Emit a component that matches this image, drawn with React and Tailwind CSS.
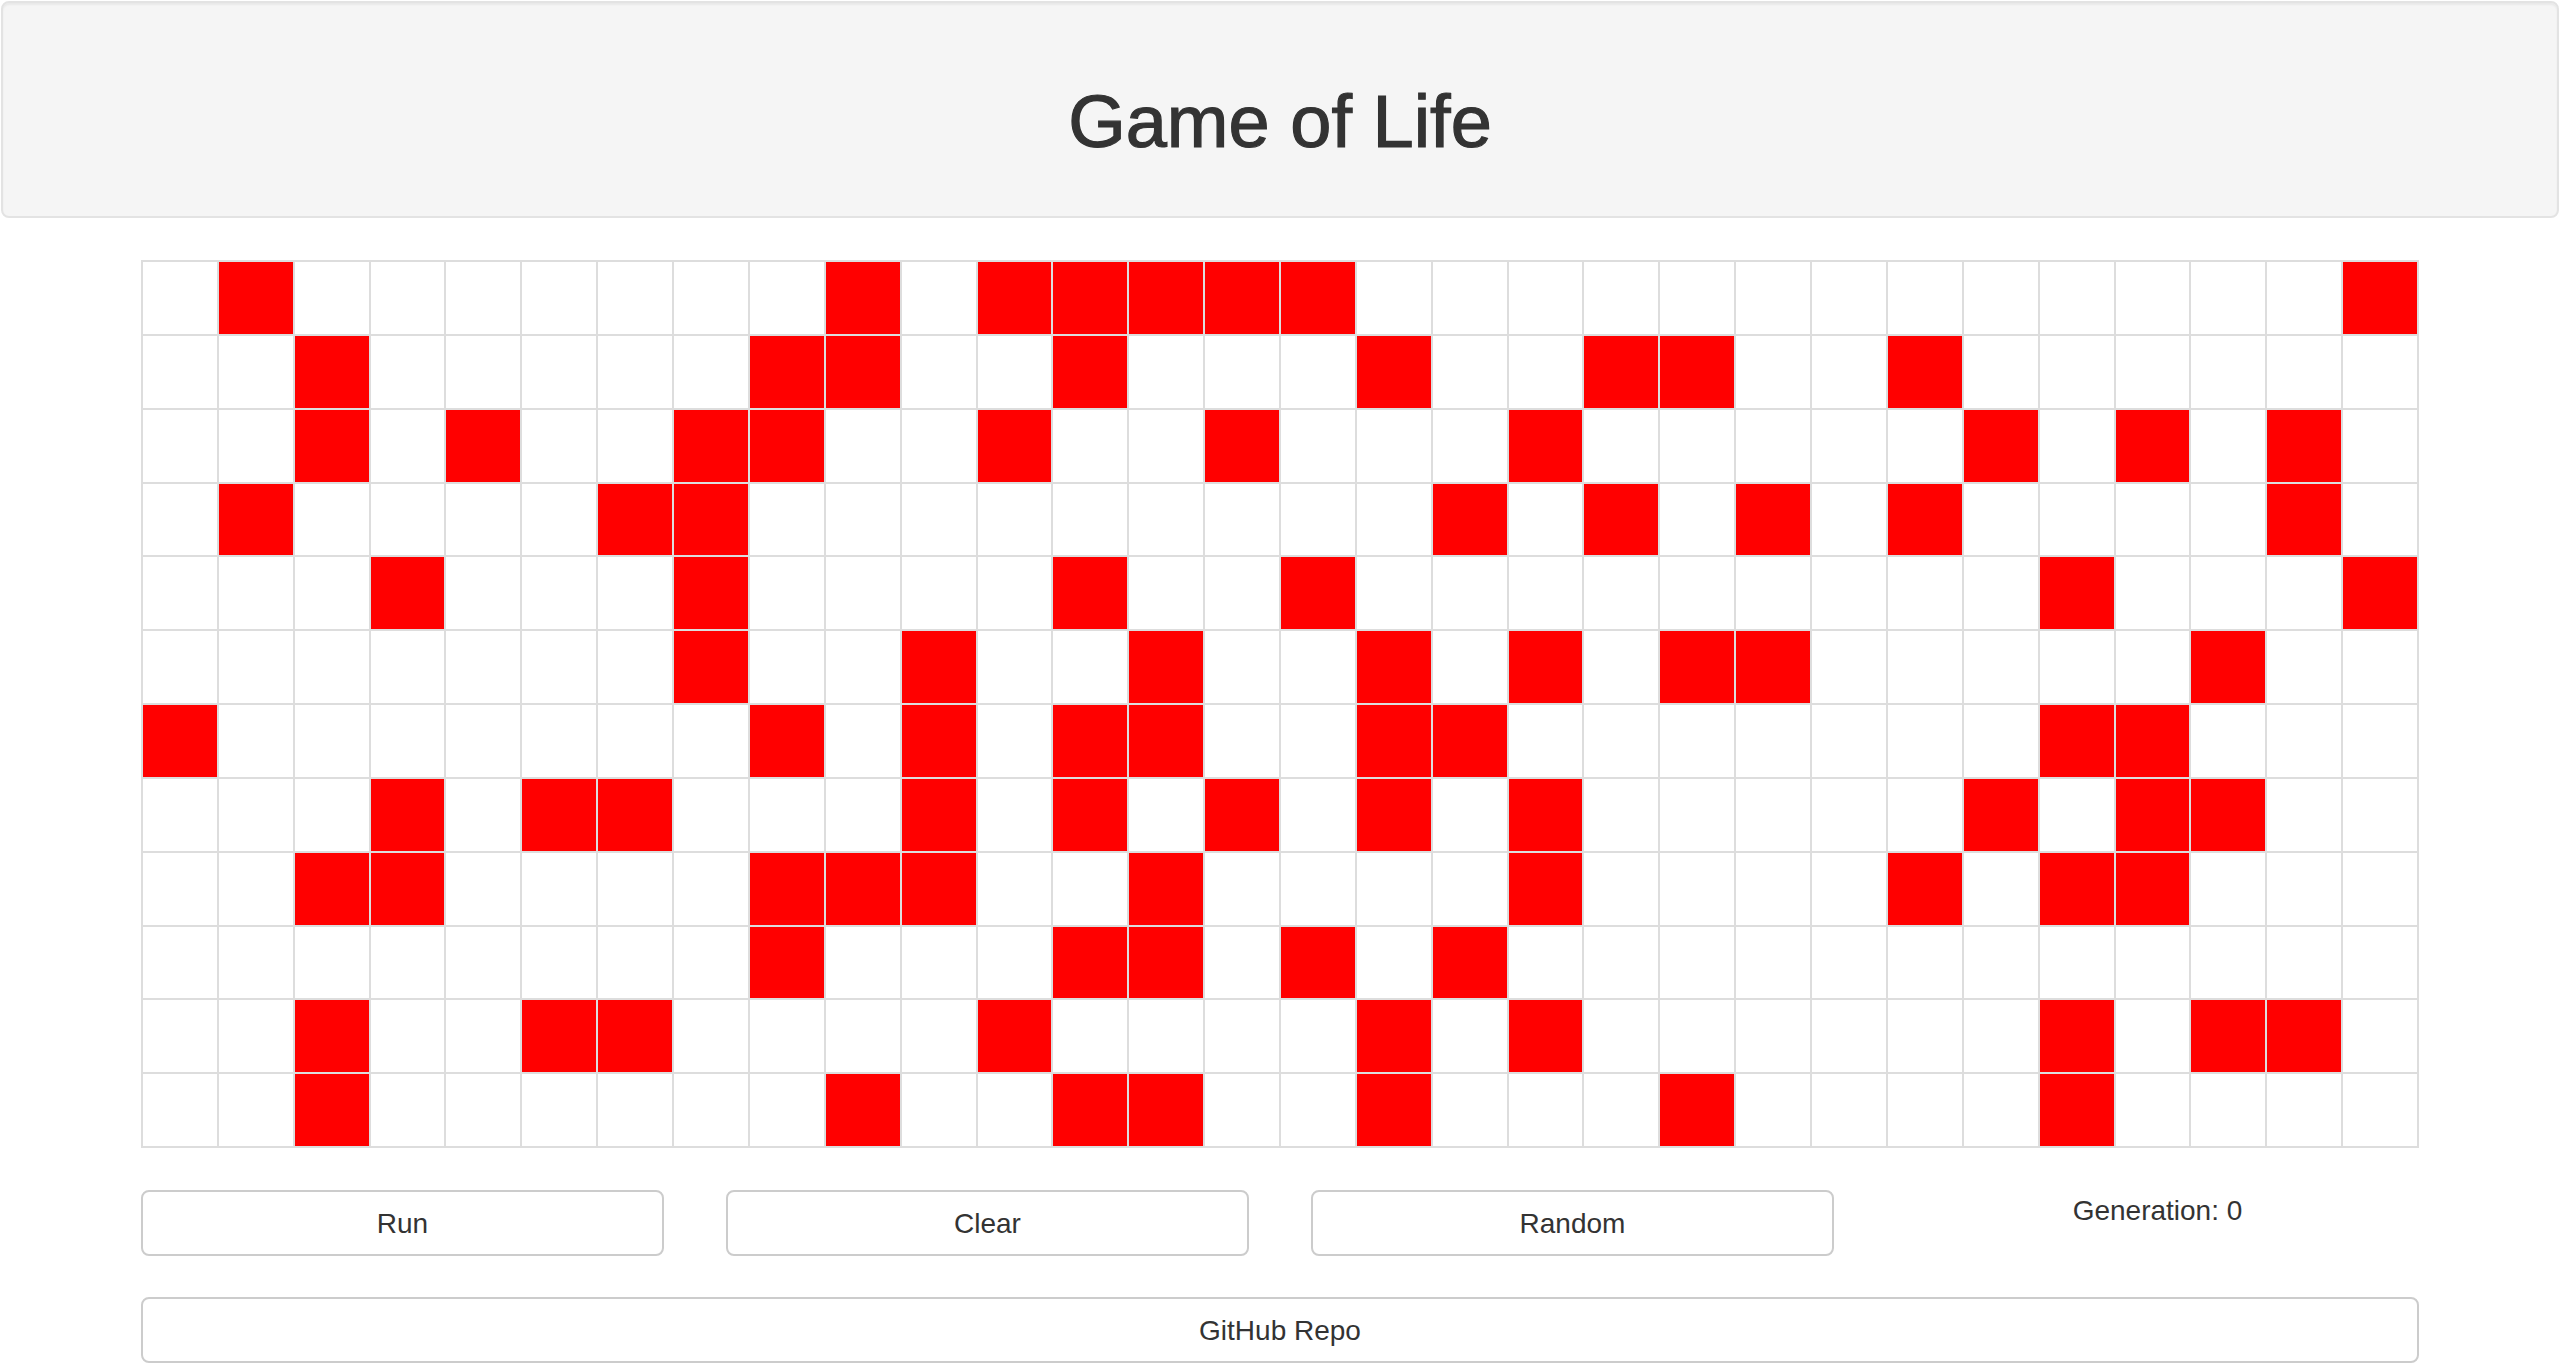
import React, { useState } from "react";

const ROWS = 12;
const COLS = 30;

// live cells, row by row
const SEED = [
  [1, 9, 11, 12, 13, 14, 15, 29],
  [2, 8, 9, 12, 16, 19, 20, 23],
  [2, 4, 7, 8, 11, 14, 18, 24, 26, 28],
  [1, 6, 7, 17, 19, 21, 23, 28],
  [3, 7, 12, 15, 25, 29],
  [7, 10, 13, 16, 18, 20, 21, 27],
  [0, 8, 10, 12, 13, 16, 17, 25, 26],
  [3, 5, 6, 10, 12, 14, 16, 18, 24, 26, 27],
  [2, 3, 8, 9, 10, 13, 18, 23, 25, 26],
  [8, 12, 13, 15, 17],
  [2, 5, 6, 11, 16, 18, 25, 27, 28],
  [2, 9, 12, 13, 16, 20, 25],
];

const makeBoard = () =>
  SEED.map((row) => {
    const cells = Array(COLS).fill(false);
    row.forEach((c) => (cells[c] = true));
    return cells;
  });

const Button = ({ children, onClick }) => (
  <button
    onClick={onClick}
    className="h-[66px] w-full bg-white border-2 border-[#ccc] rounded-[8px] text-[28px] text-[#333] leading-[40px] pt-[2px]"
  >
    {children}
  </button>
);

const App = () => {
  const [board, setBoard] = useState(makeBoard);
  const [generation] = useState(0);

  const toggle = (r, c) => {
    setBoard((prev) =>
      prev.map((row, ri) =>
        ri === r ? row.map((v, ci) => (ci === c ? !v : v)) : row
      )
    );
  };

  const clear = () =>
    setBoard(Array.from({ length: ROWS }, () => Array(COLS).fill(false)));

  const randomize = () =>
    setBoard(
      Array.from({ length: ROWS }, () =>
        Array.from({ length: COLS }, () => Math.random() < 0.25)
      )
    );

  return (
    <div className="min-h-screen bg-white font-['Liberation_Sans',Arial,sans-serif] text-[#333]">
      <div className="mx-[1px] mt-[1px] h-[217px] border-2 border-[#e3e3e3] rounded-[8px] bg-[#f5f5f5] shadow-[inset_0_2px_2px_rgba(0,0,0,0.05)] pt-[79px]">
        <h1 className="text-center text-[74px] leading-[80px] font-normal text-[#333] [-webkit-text-stroke:1.2px_#333]">
          Game of Life
        </h1>
      </div>

      <div className="w-[2278px] mx-auto mt-[42px]">
        <div className="grid grid-cols-[repeat(30,1fr)] grid-rows-[repeat(12,1fr)] gap-[2px] p-[2px] h-[888px] bg-[#ddd]">
          {board.map((row, r) =>
            row.map((alive, c) => (
              <div
                key={`${r}-${c}`}
                onClick={() => toggle(r, c)}
                className={alive ? "bg-[#ff0000]" : "bg-white"}
              />
            ))
          )}
        </div>

        <div className="grid grid-cols-4 gap-[62px] mt-[42px]">
          <Button>Run</Button>
          <Button onClick={clear}>Clear</Button>
          <Button onClick={randomize}>Random</Button>
          <div className="text-center text-[28px] leading-[40px] pt-[1px]">
            Generation: {generation}
          </div>
        </div>

        <div className="mt-[41px]">
          <Button>GitHub Repo</Button>
        </div>
      </div>
    </div>
  );
};

export default App;
